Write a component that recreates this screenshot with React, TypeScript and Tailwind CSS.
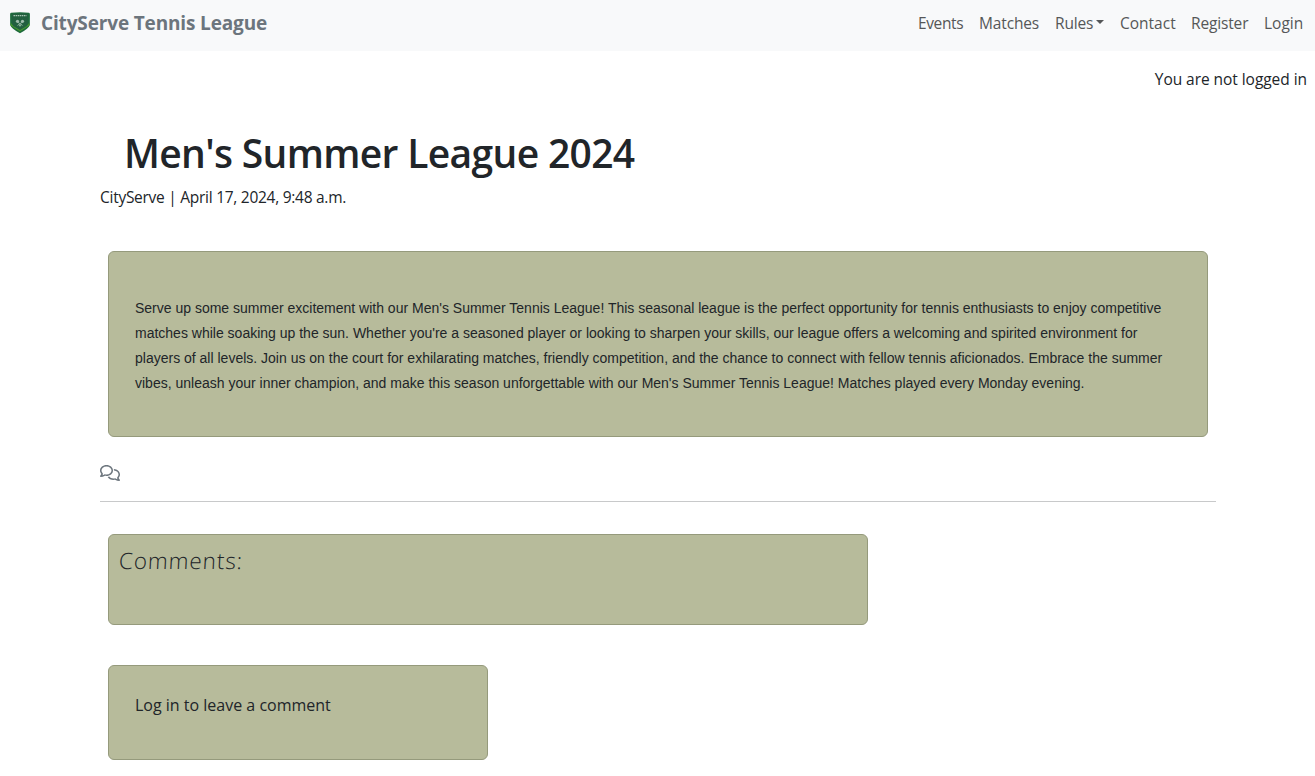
import { FaRegComments } from "react-icons/fa6";

const navLinks = [
  { label: "Events", width: "w-[45px]", spacing: "tracking-[-0.38px]" },
  { label: "Matches", width: "w-[60px]", spacing: "tracking-[-0.15px]" },
  { label: "Rules", width: "w-[49px]", spacing: "tracking-[-0.15px]", caret: true },
  { label: "Contact", width: "w-[55px]", spacing: "tracking-[0px]" },
  { label: "Register", width: "w-[57px]", spacing: "tracking-[-0.15px]" },
  { label: "Login", width: "w-[39px]", spacing: "tracking-[0px]" },
];

const paragraph = [
  "Serve up some summer excitement with our Men's Summer Tennis League! This seasonal league is the perfect opportunity for tennis enthusiasts to enjoy competitive",
  "matches while soaking up the sun. Whether you're a seasoned player or looking to sharpen your skills, our league offers a welcoming and spirited environment for",
  "players of all levels. Join us on the court for exhilarating matches, friendly competition, and the chance to connect with fellow tennis aficionados. Embrace the summer",
  "vibes, unleash your inner champion, and make this season unforgettable with our Men's Summer Tennis League! Matches played every Monday evening.",
];

function Crest() {
  return (
    <svg className="h-[22px] w-[20px]" viewBox="0 0 20 22">
      <path d="M1 .7Q10-.3 19 .7Q20 .8 19.9 3L19.8 13Q19 16.5 10 21.2Q1 16.5 .2 13L.1 3Q0 .8 1 .7Z" fill="#1d6b3c" />
      <path d="M2 1.7Q10 .8 18 1.7L17.8 12.5Q16 16 10 19.3Q4 16 2.2 12.5Z" fill="#23603f" />
      <path d="M.5 10.5L3.5 14.2L10 18L16.5 14.2L19.5 10.5L19.4 13.6L10 19.6L.6 13.6Z" fill="#46962f" />
      <path d="M3.5 3.6H16.5" stroke="#a9c6b3" strokeWidth="1.4" strokeDasharray="1.5 .6" />
      <path d="M7.5 10L12.5 13.4M12.5 10L7.5 13.4" stroke="#92b5a0" strokeWidth="1" />
      <circle cx="7.5" cy="9.3" r="1.6" fill="#9dbcaa" />
      <circle cx="12.5" cy="9.3" r="1.6" fill="#9dbcaa" />
      <circle cx="10" cy="13.6" r="1" fill="#8fb39b" />
    </svg>
  );
}

export default function App() {
  return (
    <div className="h-[776px] w-[1315px] overflow-hidden bg-white font-['Open_Sans','Noto_Sans',sans-serif] text-base leading-6 whitespace-nowrap text-[#212529]">
      <nav className="flex h-[51px] items-start justify-between bg-[#f8f9fa] pr-3 pl-[10px]">
        <div className="flex pt-[12px]">
          <Crest />
          <span className="ml-[11px] text-[19px] leading-[22px] font-bold tracking-[-0.15px] text-[#6c757d]">CityServe Tennis League</span>
        </div>
        <div className="flex gap-4 pt-[11px] text-[15.5px] text-[#555758]">
          {navLinks.map((link) => (
            <a key={link.label} className={`flex items-center ${link.width} ${link.spacing}`}>
              {link.label}
              {link.caret && <span className="mb-[2px] ml-auto border-x-4 border-t-4 border-x-transparent border-t-[#555758]" />}
            </a>
          ))}
        </div>
      </nav>
      <p className="mt-4 pr-2 text-right text-[15.5px] tracking-[-0.05px]">You are not logged in</p>
      <main className="px-[100px]">
        <h1 className="mt-[38px] pl-6 text-[39px] leading-12 font-semibold tracking-[-0.66px]">Men's Summer League 2024</h1>
        <p className="mt-[8px] text-[15.5px] tracking-[-0.27px]">CityServe | April 17, 2024, 9:48 a.m.</p>
        <section className="mt-[42px] ml-2 h-[186px] w-[1100px] rounded-md border border-[#959a7c] bg-[#b7bb9b] px-[26px] pt-[44px] font-['Liberation_Sans',Arial,sans-serif] text-[14px] leading-[25px]">
          {paragraph.map((line) => (
            <p key={line}>{line}</p>
          ))}
        </section>
        <FaRegComments className="mt-[26px] h-[20px] w-[20px] text-[#6c757d]" />
        <hr className="mt-[18px] w-[1116px] border-[#c8c9ca]" />
        <section className="mt-8 ml-2 h-[91px] w-[760px] rounded-md border border-[#959a7c] bg-[#b7bb9b] px-[10px] pt-[11px]">
          <h2 className="w-fit -skew-x-3 text-[22.5px] leading-[30px] font-light tracking-[0.9px]">Comments:</h2>
        </section>
        <section className="mt-10 ml-2 h-[95px] w-[380px] rounded-md border border-[#959a7c] bg-[#b7bb9b] px-[26px] pt-[27px]">
          <p>Log in to leave a comment</p>
        </section>
      </main>
    </div>
  );
}
